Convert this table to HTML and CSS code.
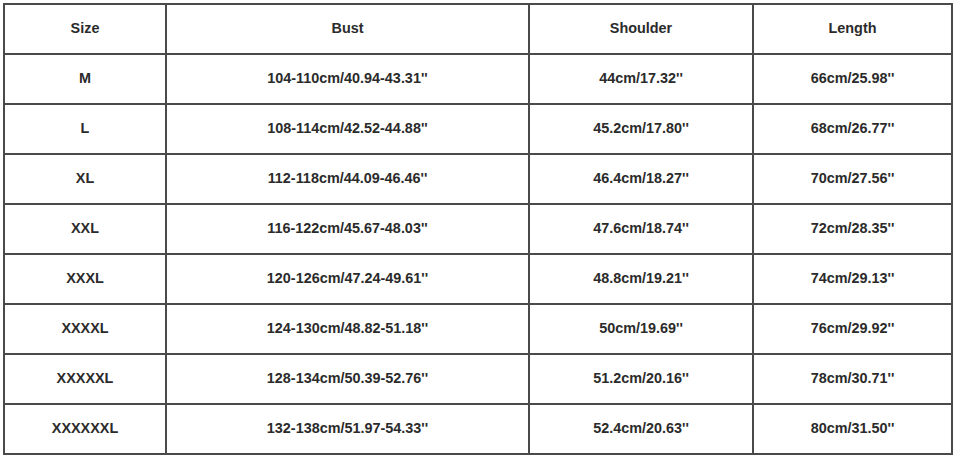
FILE: index.html
```html
<!DOCTYPE html>
<html>
<head>
<meta charset="utf-8">
<link rel="stylesheet" href="styles.css">
</head>
<body>
<div class="page">
  <div class="chart">
    <div class="cell">Size</div><div class="cell">Bust</div><div class="cell">Shoulder</div><div class="cell">Length</div>
    <div class="cell">M</div><div class="cell">104-110cm/40.94-43.31''</div><div class="cell">44cm/17.32''</div><div class="cell">66cm/25.98''</div>
    <div class="cell">L</div><div class="cell">108-114cm/42.52-44.88''</div><div class="cell">45.2cm/17.80''</div><div class="cell">68cm/26.77''</div>
    <div class="cell">XL</div><div class="cell">112-118cm/44.09-46.46''</div><div class="cell">46.4cm/18.27''</div><div class="cell">70cm/27.56''</div>
    <div class="cell">XXL</div><div class="cell">116-122cm/45.67-48.03''</div><div class="cell">47.6cm/18.74''</div><div class="cell">72cm/28.35''</div>
    <div class="cell">XXXL</div><div class="cell">120-126cm/47.24-49.61''</div><div class="cell">48.8cm/19.21''</div><div class="cell">74cm/29.13''</div>
    <div class="cell">XXXXL</div><div class="cell">124-130cm/48.82-51.18''</div><div class="cell">50cm/19.69''</div><div class="cell">76cm/29.92''</div>
    <div class="cell">XXXXXL</div><div class="cell">128-134cm/50.39-52.76''</div><div class="cell">51.2cm/20.16''</div><div class="cell">78cm/30.71''</div>
    <div class="cell">XXXXXXL</div><div class="cell">132-138cm/51.97-54.33''</div><div class="cell">52.4cm/20.63''</div><div class="cell">80cm/31.50''</div>
  </div>
</div>
</body>
</html>
```
FILE: styles.css
```css
html, body {
  margin: 0;
  padding: 0;
  background: #ffffff;
}
.page {
  padding: 3px 0 0 3px;
}
.chart {
  display: grid;
  grid-template-columns: 160px 361px 222px 197px;
  grid-auto-rows: 48px;
  gap: 2px;
  padding: 2px;
  width: max-content;
  background: #4a4a4a;
}
.cell {
  background: #ffffff;
  display: flex;
  align-items: center;
  justify-content: center;
  padding-bottom: 2px;
  box-sizing: border-box;
  font-family: "Liberation Sans", Arial, sans-serif;
  font-weight: bold;
  font-size: 14.4px;
  color: #2b2b2b;
}
```
